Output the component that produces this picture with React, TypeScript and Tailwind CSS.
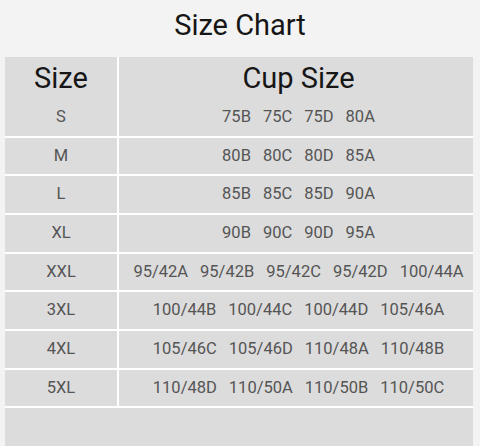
import React from "react";

const rows: [string, string[]][] = [
  ["S", ["75B", "75C", "75D", "80A"]],
  ["M", ["80B", "80C", "80D", "85A"]],
  ["L", ["85B", "85C", "85D", "90A"]],
  ["XL", ["90B", "90C", "90D", "95A"]],
  ["XXL", ["95/42A", "95/42B", "95/42C", "95/42D", "100/44A"]],
  ["3XL", ["100/44B", "100/44C", "100/44D", "105/46A"]],
  ["4XL", ["105/46C", "105/46D", "110/48A", "110/48B"]],
  ["5XL", ["110/48D", "110/50A", "110/50B", "110/50C"]],
];

export default function App() {
  return (
    <div
      className="w-[480px] h-[446px] overflow-hidden bg-[#f3f3f3]"
      style={{ fontFamily: "Roboto, 'Liberation Sans', Arial, sans-serif" }}
    >
      <div className="h-[57px] flex items-center justify-center pb-[5px] text-[29px] text-[#161616]">
        Size Chart
      </div>
      <div className="ml-[5px] w-[468px] flex flex-col gap-[2px] bg-white">
        <div className="grid grid-cols-[112px_354px] gap-[2px] h-[40px]">
          <div className="bg-[#dcdcdc] flex items-center justify-center text-[29px] text-[#161616]">
            Size
          </div>
          <div className="bg-[#dcdcdc] flex items-center justify-center pl-[5px] text-[29px] text-[#161616]">
            Cup Size
          </div>
        </div>
        {rows.map(([size, cups]) => (
          <div key={size} className="grid grid-cols-[112px_354px] gap-[2px] h-[36.66px]">
            <div className="bg-[#dcdcdc] flex items-center justify-center text-[16.5px] text-[#555555]">
              {size}
            </div>
            <div className="bg-[#dcdcdc] flex items-center justify-center gap-[12px] pl-[5px] text-[16.5px] text-[#555555] whitespace-nowrap">
              {cups.map((c) => (
                <span key={c}>{c}</span>
              ))}
            </div>
          </div>
        ))}
        <div className="h-[38px] bg-[#dcdcdc]" />
      </div>
    </div>
  );
}
